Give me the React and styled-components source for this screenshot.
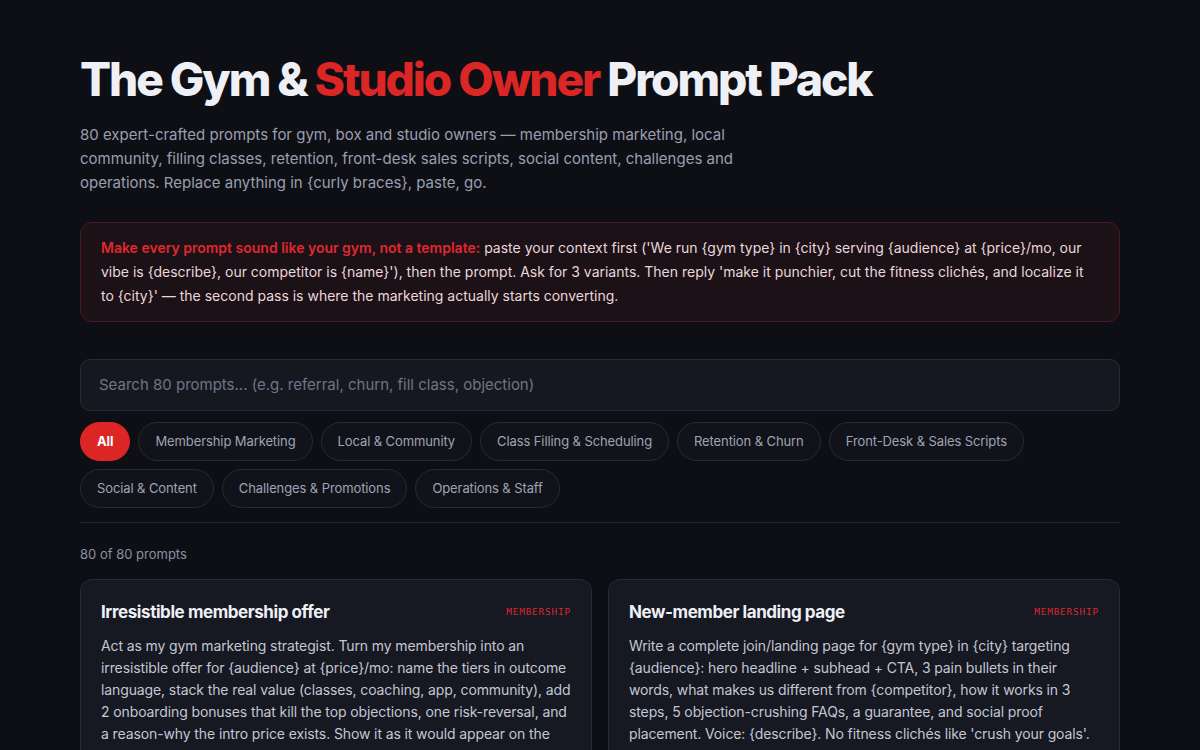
import React, { useState } from "react";
import styled, { createGlobalStyle } from "styled-components";

const categories = [
  "All",
  "Membership Marketing",
  "Local & Community",
  "Class Filling & Scheduling",
  "Retention & Churn",
  "Front-Desk & Sales Scripts",
  "Social & Content",
  "Challenges & Promotions",
  "Operations & Staff",
];

const prompts = [
  {
    title: "Irresistible membership offer",
    tag: "Membership",
    body:
      "Act as my gym marketing strategist. Turn my membership into an irresistible offer for {audience} at {price}/mo: name the tiers in outcome language, stack the real value (classes, coaching, app, community), add 2 onboarding bonuses that kill the top objections, one risk-reversal, and a reason-why the intro price exists. Show it as it would appear on the pricing page, then give me 3 headline options.",
  },
  {
    title: "New-member landing page",
    tag: "Membership",
    body:
      "Write a complete join/landing page for {gym type} in {city} targeting {audience}: hero headline + subhead + CTA, 3 pain bullets in their words, what makes us different from {competitor}, how it works in 3 steps, 5 objection-crushing FAQs, a guarantee, and social proof placement. Voice: {describe}. No fitness clichés like 'crush your goals'.",
  },
];

const GlobalStyle = createGlobalStyle`
  * { box-sizing: border-box; }
  body {
    margin: 0;
    background: #0e0f15;
    color: #e8eaf0;
    font-family: Inter, "Noto Sans", sans-serif;
  }
`;

const Page = styled.main`
  max-width: 1200px;
  padding: 54px 80px 40px;
`;

const Title = styled.h1`
  margin: 0;
  font-size: 46px;
  line-height: 1.1;
  font-weight: 800;
  letter-spacing: -0.045em;
  color: #eef0f5;

  span {
    color: #dc2626;
  }
`;

const Lead = styled.p`
  margin: 18px 0 0;
  max-width: 670px;
  font-size: 15px;
  line-height: 24px;
  color: #9a9fb0;
`;

const Callout = styled.div`
  margin-top: 27px;
  padding: 13px 20px;
  border: 1px solid #4a1a20;
  border-radius: 12px;
  background: #1b1117;
  font-size: 14px;
  line-height: 24px;
  color: #ead7da;

  strong {
    color: #e0282e;
    font-weight: 600;
  }
`;

const Search = styled.input`
  display: block;
  width: 100%;
  height: 52px;
  margin-top: 37px;
  padding: 0 18px;
  border: 1px solid #272a35;
  border-radius: 10px;
  background: #161821;
  color: #e8eaf0;
  font-family: inherit;
  font-size: 15px;
  outline: none;

  &::placeholder {
    color: #6f7484;
  }
`;

const Chips = styled.div`
  display: flex;
  flex-wrap: wrap;
  gap: 8px;
  margin-top: 11px;
  padding-bottom: 14px;
  border-bottom: 1px solid #22242e;
`;

const Chip = styled.button`
  height: 39px;
  padding: 0 16px;
  border-radius: 999px;
  border: 1px solid ${(p) => (p.$active ? "#dc2626" : "#272a35")};
  background: ${(p) => (p.$active ? "#dc2626" : "#12131a")};
  color: ${(p) => (p.$active ? "#ffffff" : "#9ea3b4")};
  font-family: inherit;
  font-size: 13px;
  letter-spacing: -0.1px;
  font-weight: ${(p) => (p.$active ? 700 : 400)};
  cursor: pointer;
`;

const Count = styled.div`
  margin-top: 23px;
  font-size: 13px;
  color: #8b90a0;
`;

const Grid = styled.div`
  display: grid;
  grid-template-columns: 1fr 1fr;
  gap: 16px;
  margin-top: 17px;
`;

const Card = styled.article`
  padding: 22px 20px 22px;
  border: 1px solid #272a36;
  border-radius: 12px;
  background: #161822;
`;

const CardHead = styled.div`
  display: flex;
  align-items: center;
  justify-content: space-between;
  gap: 12px;
`;

const CardTitle = styled.h3`
  margin: 0;
  font-size: 17px;
  font-weight: 750;
  letter-spacing: -0.025em;
  color: #eef0f5;
`;

const Tag = styled.span`
  font-family: "DejaVu Sans Mono", "Liberation Mono", monospace;
  font-size: 9.5px;
  letter-spacing: 0.08em;
  text-transform: uppercase;
  color: #d42a2e;
`;

const CardBody = styled.p`
  margin: 13px 0 0;
  font-size: 14px;
  line-height: 22px;
  letter-spacing: -0.008em;
  color: #c3c7d3;
`;

export default function App() {
  const [active, setActive] = useState("All");

  return (
    <>
      <GlobalStyle />
      <Page>
        <Title>
          The Gym &amp; <span>Studio Owner</span> Prompt Pack
        </Title>
        <Lead>
          80 expert-crafted prompts for gym, box and studio owners — membership
          marketing, local community, filling classes, retention, front-desk
          sales scripts, social content, challenges and operations. Replace
          anything in {"{curly braces}"}, paste, go.
        </Lead>
        <Callout>
          <strong>Make every prompt sound like your gym, not a template:</strong>{" "}
          paste your context first ('We run {"{gym type}"} in {"{city}"} serving{" "}
          {"{audience}"} at {"{price}"}/mo, our vibe is {"{describe}"}, our
          competitor is {"{name}"}'), then the prompt. Ask for 3 variants. Then
          reply 'make it punchier, cut the fitness clichés, and localize it to{" "}
          {"{city}"}' — the second pass is where the marketing actually starts
          converting.
        </Callout>
        <Search placeholder="Search 80 prompts... (e.g. referral, churn, fill class, objection)" />
        <Chips>
          {categories.map((c) => (
            <Chip key={c} $active={c === active} onClick={() => setActive(c)}>
              {c}
            </Chip>
          ))}
        </Chips>
        <Count>80 of 80 prompts</Count>
        <Grid>
          {prompts.map((p) => (
            <Card key={p.title}>
              <CardHead>
                <CardTitle>{p.title}</CardTitle>
                <Tag>{p.tag}</Tag>
              </CardHead>
              <CardBody>{p.body}</CardBody>
            </Card>
          ))}
        </Grid>
      </Page>
    </>
  );
}
